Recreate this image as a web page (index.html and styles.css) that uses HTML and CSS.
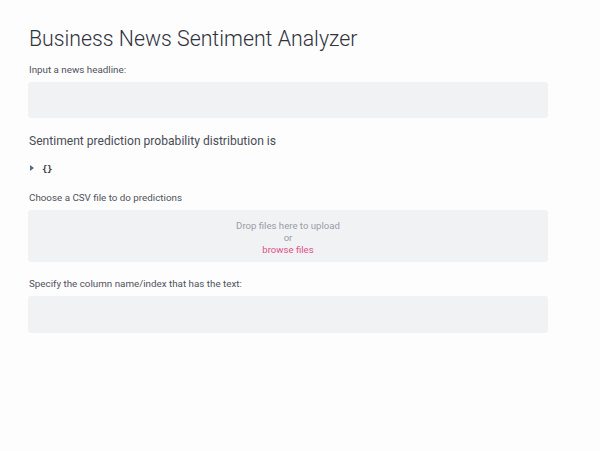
FILE: index.html
```html
<!DOCTYPE html>
<html>
<head>
<meta charset="utf-8">
<link rel="stylesheet" href="styles.css">
</head>
<body>
<main class="app">
  <h1 class="title">Business News Sentiment Analyzer</h1>
  <div class="field">
    <label class="label">Input a news headline:</label>
    <div class="input"></div>
  </div>
  <p class="subhead">Sentiment prediction probability distribution is</p>
  <div class="json">
    <svg class="caret" width="4" height="6" viewBox="0 0 4 6"><path d="M0 0 L4 3 L0 6 Z" fill="#5a6a8a"/></svg>
    <span class="braces">{}</span>
  </div>
  <div class="field upload-field">
    <label class="label">Choose a CSV file to do predictions</label>
    <div class="dropzone">
      <span class="drop-text">Drop files here to upload</span>
      <span class="drop-text">or</span>
      <span class="browse">browse files</span>
    </div>
  </div>
  <div class="field">
    <label class="label">Specify the column name/index that has the text:</label>
    <div class="input"></div>
  </div>
</main>
</body>
</html>
```
FILE: styles.css
```css
html, body {
  margin: 0;
  padding: 0;
  background: #fdfdfe;
}
body {
  font-family: Roboto, "Liberation Sans", sans-serif;
  color: #3a3c46;
  width: 600px;
  height: 451px;
  overflow: hidden;
}
.app {
  padding: 23px 52px 0 28px;
  display: flex;
  flex-direction: column;
}
.title {
  margin: 0;
  font-weight: 300;
  font-size: 21.3px;
  line-height: 32px;
  color: #30323c;
  padding-left: 1px;
}
.field {
  display: flex;
  flex-direction: column;
}
.label {
  font-size: 9.8px;
  line-height: 14px;
  color: #50525a;
  padding-left: 1px;
  margin-top: 8px;
}
.input {
  margin-top: 5px;
  height: 36px;
  background: #f0f2f4;
  border-radius: 3px;
}
.subhead {
  margin: 14px 0 0;
  font-size: 12.1px;
  line-height: 18px;
  color: #4a4c55;
  padding-left: 1px;
}
.json {
  display: flex;
  align-items: center;
  margin-top: 12px;
  padding-left: 2px;
  height: 14px;
}
.caret {
  margin-right: 8px;
  margin-top: -2px;
}
.braces {
  font-family: "DejaVu Sans Mono", monospace;
  font-size: 9px;
  font-weight: bold;
  color: #3a3c46;
  letter-spacing: -0.5px;
}
.upload-field {
  margin-top: 7px;
}
.dropzone {
  margin-top: 5px;
  height: 52px;
  box-sizing: border-box;
  padding-top: 4px;
  background: #f0f2f4;
  border-radius: 3px;
  display: flex;
  flex-direction: column;
  align-items: center;
  justify-content: center;
}
.drop-text {
  font-size: 9.6px;
  line-height: 12px;
  color: #9a9ca4;
}
.browse {
  font-size: 9.6px;
  line-height: 12px;
  color: #e0508a;
}
.upload-field + .field {
  margin-top: 7px;
}
.upload-field + .field .input {
  height: 37px;
}
```
